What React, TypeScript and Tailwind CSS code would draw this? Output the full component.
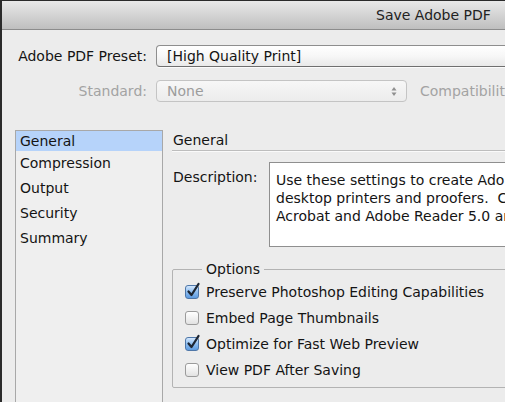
import React from "react";

function Check({ checked }: { checked: boolean }) {
  return (
    <div className="relative w-[14px] h-[14px] shrink-0">
      <div
        className={
          checked
            ? "w-[14px] h-[14px] rounded-[3px] border border-[#4f77a8] bg-gradient-to-b from-[#d3e7fd] via-[#8dbdf0] to-[#5d9be0]"
            : "w-[14px] h-[14px] rounded-[3px] border border-[#9b9b9b] bg-gradient-to-b from-[#ffffff] to-[#e2e2e2]"
        }
      />
      {checked && (
        <svg className="absolute left-[1px] top-[-3px]" width="15" height="16" viewBox="0 0 15 16">
          <path d="M2.5 9.5 L5.5 13 L12.5 2" fill="none" stroke="#1d2633" strokeWidth="2.3" strokeLinecap="round" strokeLinejoin="round" />
        </svg>
      )}
    </div>
  );
}

export default function App() {
  const items = ["Compression", "Output", "Security", "Summary"];
  const options: [string, boolean][] = [
    ["Preserve Photoshop Editing Capabilities", true],
    ["Embed Page Thumbnails", false],
    ["Optimize for Fast Web Preview", true],
    ["View PDF After Saving", false],
  ];
  return (
    <div className="w-[505px] h-[402px] overflow-hidden bg-[#ececec] border-l-2 border-t border-[#2b2b2b] font-['DejaVu_Sans',sans-serif] text-[14px] text-[#141414] flex flex-col">
      {/* title bar */}
      <div className="h-[29px] shrink-0 bg-gradient-to-b from-[#e9e9e9] to-[#bfbfbf] border-b border-[#8c8c8c] flex items-center pl-[374px] text-[#222] overflow-hidden">
        <span className="whitespace-nowrap">Save Adobe PDF</span>
      </div>

      {/* preset row */}
      <div className="mt-[15px] flex items-center shrink-0">
        <div className="w-[145px] shrink-0 text-right whitespace-nowrap">Adobe PDF Preset:</div>
        <div className="ml-[9px] w-[400px] shrink-0 h-[22px] rounded-[4px] border border-[#8e8e8e] border-b-[#6f6f6f] bg-gradient-to-b from-[#ffffff] via-[#f7f7f7] to-[#e9e9e9] flex items-center pl-[10px] shadow-[0_1px_0_rgba(255,255,255,0.8)]">
          <span className="whitespace-nowrap">[High Quality Print]</span>
        </div>
      </div>

      {/* standard row */}
      <div className="mt-[13px] flex items-center shrink-0">
        <div className="w-[145px] shrink-0 text-right whitespace-nowrap text-[#a3a3a3]">Standard:</div>
        <div className="ml-[9px] w-[251px] shrink-0 h-[22px] rounded-[4px] border border-[#c4c4c4] bg-gradient-to-b from-[#f7f7f7] to-[#ececec] flex items-center pl-[10px] pr-[8px] justify-between">
          <span className="whitespace-nowrap text-[#9c9c9c]">None</span>
          <svg width="8" height="13" viewBox="0 0 8 13">
            <path d="M4 2 L6.5 5.5 L1.5 5.5 Z" fill="#8f8f8f" />
            <path d="M4 11 L6.5 7.5 L1.5 7.5 Z" fill="#8f8f8f" />
          </svg>
        </div>
        <div className="ml-[13px] shrink-0 whitespace-nowrap text-[#a3a3a3]">Compatibility:</div>
      </div>

      {/* main area */}
      <div className="mt-[28px] flex flex-1 min-h-0">
        {/* sidebar */}
        <div className="ml-[13px] w-[148px] shrink-0 border-l border-t border-r border-[#a8a8a8] bg-[#efefef]">
          <div className="h-[20px] bg-[#b6d3fa] flex items-center pl-[4px]">General</div>
          {items.map((t) => (
            <div key={t} className="h-[25px] flex items-center pl-[4px]">
              {t}
            </div>
          ))}
        </div>

        {/* right panel */}
        <div className="ml-[9px] flex-1 min-w-0 flex flex-col">
          <div className="h-[21px] flex items-center pl-[1px] border-b border-[#bdbdbd] shadow-[0_1px_0_#fafafa]">
            General
          </div>

          <div className="mt-[11px] flex">
            <div className="w-[97px] shrink-0 pl-[1px] mt-[6px] leading-[18px] whitespace-nowrap">Description:</div>
            <div className="w-[300px] shrink-0 h-[85px] border border-[#8f8f8f] bg-white pl-[6px] pt-[8px] leading-[18px] overflow-hidden">
              <div className="whitespace-nowrap">Use these settings to create Adobe PDF documents for quality printing on</div>
              <div className="whitespace-nowrap">desktop printers and proofers.&nbsp; Created PDF documents can be opened with</div>
              <div className="whitespace-nowrap">Acrobat and Adobe Reader 5.0 and later.</div>
            </div>
          </div>

          <fieldset className="mt-[14px] w-[400px] border border-[#b3b3b3] rounded-[2px] pl-[12px] pt-[1px] pb-[4px]">
            <legend className="ml-[17px] px-[4px] leading-[17px]">Options</legend>
            {options.map(([t, c]) => (
              <div key={t} className="h-[26px] flex items-center gap-[7px]">
                <Check checked={c} />
                <span className="whitespace-nowrap">{t}</span>
              </div>
            ))}
          </fieldset>
        </div>
      </div>
    </div>
  );
}
